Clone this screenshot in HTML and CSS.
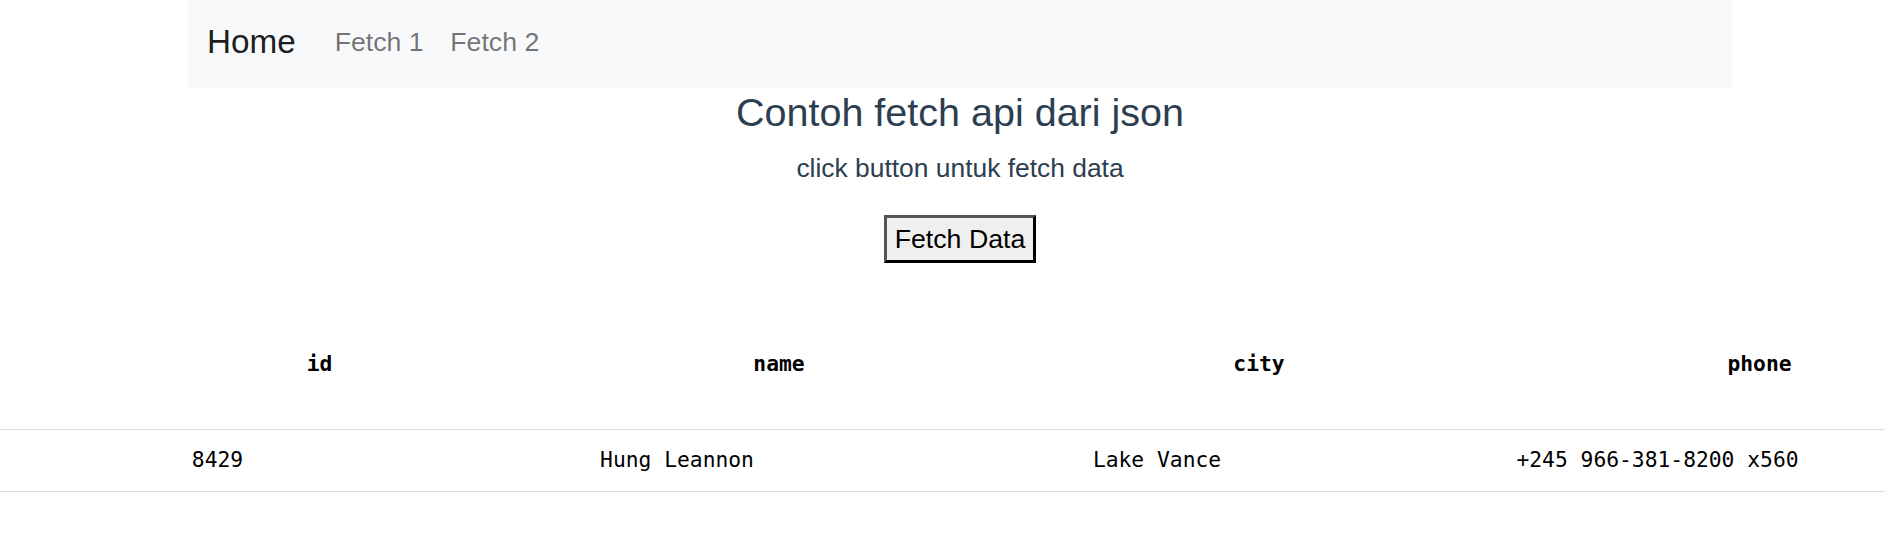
FILE: index.html
```html
<!DOCTYPE html>
<html lang="en">
<head>
  <meta charset="UTF-8">
  <meta name="viewport" content="width=device-width, initial-scale=1.0">
  <title>Contoh fetch api</title>
  <link rel="stylesheet" href="styles.css">
</head>
<body>

<div id="app">
  <nav class="navbar">
    <a class="navbar-brand" href="#">Home</a>
    <ul class="nav-links">
      <li><a class="nav-link" href="#">Fetch 1</a></li>
      <li><a class="nav-link" href="#">Fetch 2</a></li>
    </ul>
  </nav>

  <div class="content">
    <h1 class="title">Contoh fetch api dari json</h1>
    <p class="subtitle">click button untuk fetch data</p>
    <button class="fetch-btn" type="button">Fetch Data</button>
  </div>

  <table class="data-table">
    <colgroup>
      <col class="col-id">
      <col class="col-name">
      <col class="col-city">
      <col class="col-phone">
    </colgroup>
    <thead>
      <tr>
        <th>id</th>
        <th>name</th>
        <th>city</th>
        <th>phone</th>
      </tr>
    </thead>
    <tbody>
      <tr>
        <td>8429</td>
        <td>Hung Leannon</td>
        <td>Lake Vance</td>
        <td>+245 966-381-8200 x560</td>
      </tr>
    </tbody>
  </table>
</div>

</body>
</html>
```

FILE: styles.css
```css
/* Global */
html {
  overflow-x: hidden;
}

body {
  margin: 0;
  width: 1920px;
  font-family: 'Liberation Sans', Arial, Helvetica, sans-serif;
  background-color: #ffffff;
}

#app {
  color: #2c3e50;
}

/* Navbar */
.navbar {
  max-width: 1544px;
  height: 88px;
  margin: 0 auto;
  padding: 0 19px 5px;
  box-sizing: border-box;
  display: flex;
  align-items: center;
  background-color: #f8f9fa;
}

.navbar-brand {
  font-size: 33.3px;
  line-height: 50px;
  color: rgba(0, 0, 0, 0.9);
  text-decoration: none;
  margin-right: 25.5px;
}

.nav-links {
  list-style: none;
  margin: 0;
  padding: 0;
  display: flex;
}

.nav-link {
  display: block;
  padding: 13px 13.3px;
  font-size: 26.7px;
  line-height: 40px;
  color: rgba(0, 0, 0, 0.55);
  text-decoration: none;
}

/* Heading block */
.content {
  text-align: center;
}

.title {
  margin: 0 0 12px;
  font-size: 39.5px;
  font-weight: 400;
  line-height: 48px;
}

.subtitle {
  margin: 0 0 26.7px;
  font-size: 26.4px;
  line-height: 40px;
}

.fetch-btn {
  margin: 0;
  padding: 5px 8px;
  font-family: 'Liberation Sans', Arial, sans-serif;
  font-size: 26.7px;
  line-height: 32px;
  color: #000;
  background-color: #efefef;
  border: 3px solid;
  border-color: #555 #000 #000 #555;
  border-radius: 0;
  cursor: pointer;
}

/* Table */
.data-table {
  width: 100%;
  margin-top: 35px;
  table-layout: fixed;
  border-collapse: collapse;
  font-family: 'DejaVu Sans Mono', 'Liberation Mono', monospace;
  font-size: 21.3px;
  line-height: 25px;
  color: #000;
}

.col-id { width: 435px; }
.col-name { width: 484px; }
.col-city { width: 476px; }
.col-phone { width: 525px; }

.data-table th,
.data-table td {
  text-align: center;
  white-space: nowrap;
  border-bottom: 1px solid #dedede;
}

.data-table th {
  padding: 53px 0 53px 204px;
  font-weight: 700;
}

.data-table td {
  padding: 17px 0 19px;
}
```
